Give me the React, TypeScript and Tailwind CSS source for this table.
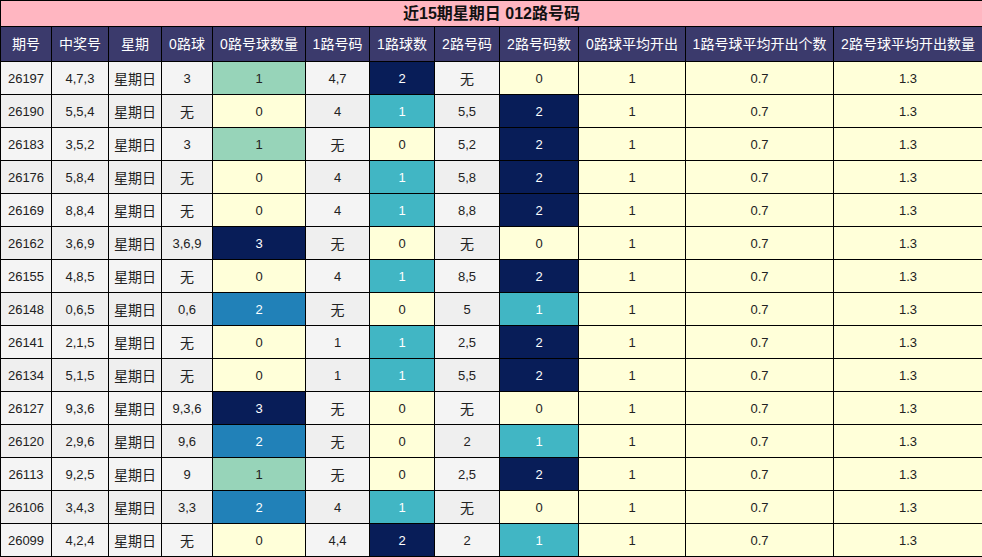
import React from 'react';

type Cell = { v: string; c?: string };

const headers = [
  '期号', '中奖号', '星期', '0路球', '0路号球数量', '1路号码', '1路球数', '2路号码', '2路号码数',
  '0路球平均开出', '1路号球平均开出个数', '2路号球平均开出数量',
];
const widths = [51, 57, 53, 51, 93, 64, 65, 65, 79, 107, 148, 149];

// heat colours
const Y = 'bg-[#ffffd9] text-[#222]';
const G = 'bg-[#97d4b9] text-[#222]';
const T = 'bg-[#41b6c4] text-white';
const B = 'bg-[#2181b8] text-white';
const N = 'bg-[#081d58] text-white';

const raw: [string, string, string, string, string, string, string, string, string, string][] = [
  ['26197', '4,7,3', '3', '1', G, '4,7', '2', N, '无', '0'],
  ['26190', '5,5,4', '无', '0', Y, '4', '1', T, '5,5', '2'],
  ['26183', '3,5,2', '3', '1', G, '无', '0', Y, '5,2', '2'],
  ['26176', '5,8,4', '无', '0', Y, '4', '1', T, '5,8', '2'],
  ['26169', '8,8,4', '无', '0', Y, '4', '1', T, '8,8', '2'],
  ['26162', '3,6,9', '3,6,9', '3', N, '无', '0', Y, '无', '0'],
  ['26155', '4,8,5', '无', '0', Y, '4', '1', T, '8,5', '2'],
  ['26148', '0,6,5', '0,6', '2', B, '无', '0', Y, '5', '1'],
  ['26141', '2,1,5', '无', '0', Y, '1', '1', T, '2,5', '2'],
  ['26134', '5,1,5', '无', '0', Y, '1', '1', T, '5,5', '2'],
  ['26127', '9,3,6', '9,3,6', '3', N, '无', '0', Y, '无', '0'],
  ['26120', '2,9,6', '9,6', '2', B, '无', '0', Y, '2', '1'],
  ['26113', '9,2,5', '9', '1', G, '无', '0', Y, '2,5', '2'],
  ['26106', '3,4,3', '3,3', '2', B, '4', '1', T, '无', '0'],
  ['26099', '4,2,4', '无', '0', Y, '4,4', '2', N, '2', '1'],
];

const twoColor = (v: string) => (v === '0' ? Y : v === '1' ? T : N);

const rows: Cell[][] = raw.map((r) => [
  { v: r[0] },
  { v: r[1] },
  { v: '星期日' },
  { v: r[2] },
  { v: r[3], c: r[4] },
  { v: r[5] },
  { v: r[6], c: r[7] },
  { v: r[8] },
  { v: r[9], c: twoColor(r[9]) },
  { v: '1', c: Y },
  { v: '0.7', c: Y },
  { v: '1.3', c: Y },
]);

const App: React.FC = () => {
  return (
    <div
      className="w-[982px] h-[557px] bg-white overflow-hidden"
      style={{ fontFamily: '"Liberation Sans", "Noto Sans CJK SC", sans-serif' }}
    >
      <table className="border-collapse table-fixed w-[982px] border border-black">
        <colgroup>
          {widths.map((w, i) => (
            <col key={i} style={{ width: w }} />
          ))}
        </colgroup>
        <tbody>
          {/* Title */}
          <tr className="h-[26px]">
            <td
              colSpan={12}
              className="bg-[#ffb6c1] border border-black text-center text-[16px] font-bold text-[#111] leading-none p-0"
            >
              近15期星期日 012路号码
            </td>
          </tr>
          {/* Header */}
          <tr className="h-[35px]">
            {headers.map((h) => (
              <td
                key={h}
                className="bg-[#3b3a6c] border border-black text-center text-white text-[14px] leading-none p-0 whitespace-nowrap"
              >
                {h}
              </td>
            ))}
          </tr>
          {rows.map((row, ri) => (
            <tr key={ri} className="h-[33px]">
              {row.map((cell, ci) => (
                <td
                  key={ci}
                  className={`border border-black text-center text-[13px] leading-none p-0 ${
                    cell.c ?? (ri % 2 === 0 ? 'bg-[#f4f4f4] text-[#222]' : 'bg-[#efefef] text-[#222]')
                  } ${cell.v === '无' || cell.v === '星期日' ? 'text-[14px] pt-[2px]' : ''}`}
                >
                  {cell.v}
                </td>
              ))}
            </tr>
          ))}
        </tbody>
      </table>
    </div>
  );
};

export default App;
